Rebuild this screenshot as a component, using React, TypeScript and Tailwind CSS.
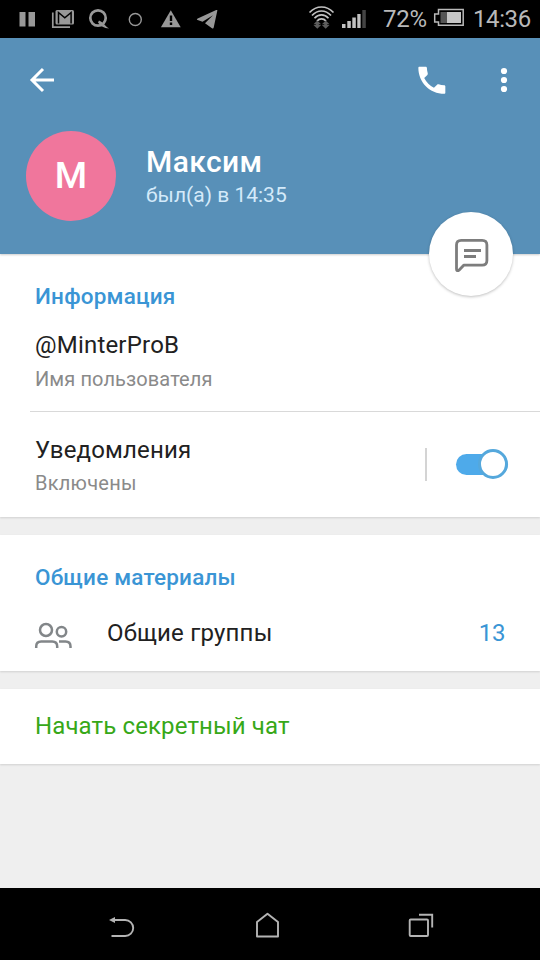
import type { ReactNode } from 'react';

function StatusBar() {
  return (
    <div className="flex h-[38px] items-center justify-between bg-black text-[24px] leading-[38px] text-[#b9b9b9]">
      <svg width="230" height="38" fill="#989898">
        <path d="M19.500 12h6v14.500h-6zM28.500 12h6.500v14.500h-6.500z" />
        <path d="M52.800 12.500V27.200H70" fill="none" stroke="#989898" strokeWidth="1.700" />
        <rect x="55.500" y="10" width="18.500" height="14.500" rx="1.500" />
        <path d="M58.500 23.500V12.500l6.300 5.300 6.300-5.300v11" fill="none" stroke="#000" strokeWidth="1.500" />
        <circle cx="98" cy="18" r="7.700" fill="none" stroke="#989898" strokeWidth="2.700" />
        <path d="M99 20.500c4 1.500 6 5.500 10 8-5-.2-8.500-2.500-11-6z" />
        <circle cx="135.300" cy="19.500" r="6" fill="none" stroke="#989898" strokeWidth="1.400" />
        <path d="M170.800 10.300l9.900 17h-19.800z" />
        <path d="M169.800 15.500h2.400v5.500h-2.400zM169.800 22.500h2.400v2.400h-2.400z" fill="#000" />
        <path d="M217.300 10.800l-3.600 16.800c-.2.900-.9 1.100-1.700.6l-7-5 8-8-10.500 6.500-4.900-1.600c-1-.4-1-1.200.1-1.700l18.500-8.300c.8-.3 1.400-.1 1.100.7z" />
      </svg>
      <div className="flex items-center">
        <svg width="74" height="38" viewBox="306 0 74 38">
          <g fill="none" stroke="#c2c2c2" strokeWidth="1.700">
            <path d="M310.500 12.500c7-7.300 17-7.300 24 0M313 15.500c5.500-6 13.500-6 19 0M315.500 18.300c4-4.500 10-4.500 14 0M318 21c2.500-2.800 6.500-2.800 9 0" />
          </g>
          <path d="M318.300 20.500l3.800 3.700h-2.300v.800h2.300l-3.800 3.700-3.800-3.700h2.300v-.8h-2.300zM326.700 20.500l3.800 3.700h-2.300v.8h2.300l-3.800 3.700-3.800-3.700h2.300v-.8h-2.300z" fill="#5c5c5c" />
          <path d="M343 24h3.500v4H343zM348.300 21h3.500v7h-3.500zM353.300 17.500h3.500V28h-3.500zM358.300 14h3.300v14h-3.300z" fill="#c2c2c2" />
          <path d="M363.300 10h3.500v18h-3.500z" fill="#444" />
        </svg>
        <span className="ml-1 w-[50px] tracking-[-0.2px]">72%</span>
        <svg width="32" height="38" viewBox="433 0 32 38">
          <path d="M438.500 9.500h24.700v15.700h-24.700v-3.200h-3.800v-8h3.800z" fill="none" stroke="#b9b9b9" strokeWidth="1.500" />
          <path d="M440.500 12H447v11h-6.500z" fill="#555" />
          <path d="M447 12h14v11h-14z" fill="#c6c6c6" />
        </svg>
        <span className="ml-2 w-[67px] tracking-[-0.4px]">14:36</span>
      </div>
    </div>
  );
}

function Header() {
  return (
    <header className="relative z-10 h-[216px] bg-[#5890b8] text-white shadow-[0_1px_2px_rgba(0,0,0,0.2)]">
      <div className="flex h-[84px] items-center">
        <svg width="32" height="32" viewBox="26 64 32 32" className="ml-[26px]">
          <path d="M54 80H32M43 69L32 80l11 11" fill="none" stroke="#fff" strokeWidth="3" />
        </svg>
        <svg width="36" height="36" viewBox="0 0 24 24" className="ml-auto" fill="#fff">
          <path d="M6.800 10.700c1.440 2.830 3.760 5.060 6.500 6.500l2.100-2.100c.27-.27.670-.36 1.020-.24 1.120.37 2.330.57 3.670.57.400 0 .8.300.8.800V20.500c0 .4-.3.700-.7.700C10.500 21.200 2.900 13.500 2.900 3.800c0-.4.300-.7.700-.7h4.200c.5 0 .8.400.8.800 0 1.250.2 2.550.57 3.670.11.350.03.740-.25 1.020z" />
        </svg>
        <svg width="12" height="32" viewBox="0 0 12 32" className="mr-[30px] ml-[48px]" fill="#fff">
          <circle cx="6" cy="7" r="3.100" />
          <circle cx="6" cy="16" r="3.100" />
          <circle cx="6" cy="25" r="3.100" />
        </svg>
      </div>

      <div className="flex items-center pt-[9px] pl-[26px]">
        <div className="flex size-[90px] items-center justify-center rounded-full bg-[#f0769c] text-[37px] font-medium">
          М
        </div>
        <div className="ml-[30px] pt-[5px]">
          <h1 className="text-[30px] leading-[32px] font-medium tracking-[0.400px]">Максим</h1>
          <p className="mt-px text-[21px] leading-[32px] text-[#d4eafa]">был(а) в 14:35</p>
        </div>
      </div>

      <button className="absolute right-[27px] bottom-[-42px] flex size-[84px] items-center justify-center rounded-full bg-white shadow-[0_1px_3px_rgba(0,0,0,0.25)]">
        <svg width="40" height="40" viewBox="451 234 40 40" fill="none" stroke="#7d7d7d" strokeWidth="2.800" strokeLinejoin="round">
          <path d="M456.500 269V245q0-4.700 4.700-4.700h21q4.700 0 4.700 4.700v15.500q0 4.700-4.700 4.700h-18.500l-4.500 4.800q-2.700 1.700-2.700-1z" />
          <path d="M464 250.500h17M464 256.500h12" />
        </svg>
      </button>
    </header>
  );
}

function Card({ children }: { children: ReactNode }) {
  return <section className="bg-white shadow-[0_1px_2px_rgba(0,0,0,0.13)]">{children}</section>;
}

function NavBar() {
  return (
    <nav className="mt-auto flex h-[72px] items-center bg-black">
      <svg width="540" height="72" fill="none" stroke="#b4b4b4" strokeWidth="1.900">
        <path d="M112 32h13.200a8 8 0 0 1 0 16H111.500" />
        <path d="M109 32l6-3v6z" fill="#b4b4b4" stroke="none" />
        <path d="M257 48.500V34l10.500-8.300L278 34v14.500z" strokeLinejoin="round" />
        <rect x="409.700" y="31.500" width="18.300" height="16.500" rx="1" />
        <path d="M419 26.700h13.200V39.500" />
      </svg>
    </nav>
  );
}

export default function App() {
  return (
    <main className="flex h-[960px] w-[540px] flex-col overflow-hidden bg-[#efefef] font-['Roboto',sans-serif] text-[24px] leading-[24px] text-[#212121]">
      <StatusBar />
      <Header />

      <Card>
        <div className="pt-[30px] pb-5 pl-[35px]">
          <h2 className="text-[22.500px] font-medium tracking-[0.2px] text-[#3a95d5]">Информация</h2>
          <p className="mt-[25px] tracking-[0.2px]">@MinterProB</p>
          <p className="mt-[10px] text-[20px] tracking-[0.1px] text-[#8a8a8a]">Имя пользователя</p>
        </div>
        <div className="ml-[30px] h-px bg-[#d9d9d9]" />
        <div className="flex h-[105px] items-center pr-8 pl-[35px]">
          <div className="pt-[3px]">
            <p className="tracking-[0.15px]">Уведомления</p>
            <p className="mt-[9px] text-[20px] tracking-[0.25px] text-[#8a8a8a]">Включены</p>
          </div>
          <div className="ml-auto h-[33px] w-[2px] bg-[#d4d4d4]" />
          <div className="mb-px ml-[29px] flex h-[21px] w-[52px] items-center justify-end rounded-full bg-[#4eaaea]">
            <div className="size-[30px] shrink-0 rounded-full border-[3px] border-[#55a8dc] bg-white" />
          </div>
        </div>
      </Card>

      <div className="mt-[18px]">
        <Card>
          <div className="h-[136px] pt-[30px] pr-[35px] pl-[35px]">
            <h2 className="text-[22.500px] font-medium tracking-[0.2px] text-[#3a95d5]">Общие материалы</h2>
            <div className="mt-[30px] flex items-center">
              <svg width="38" height="28" viewBox="35 619 38 28" fill="none" stroke="#828689" strokeWidth="2.500" className="overflow-visible">
                <circle cx="46" cy="630" r="6" />
                <circle cx="61.500" cy="631.800" r="4.700" />
                <path d="M36.200 648v-1.500q0-5 5-5h11q5 0 5 5v1.500M59 641.500h6.500q5 0 5 5v1.500" />
              </svg>
              <span className="ml-[34px] tracking-[0.2px]">Общие группы</span>
              <span className="ml-auto tracking-[-0.4px] text-[#3a95d5]">13</span>
            </div>
          </div>
        </Card>
      </div>

      <div className="mt-[18px]">
        <Card>
          <p className="h-[75px] pt-[25px] pl-[35px] tracking-[0.12px] text-[#37a818]">Начать секретный чат</p>
        </Card>
      </div>

      <NavBar />
    </main>
  );
}
